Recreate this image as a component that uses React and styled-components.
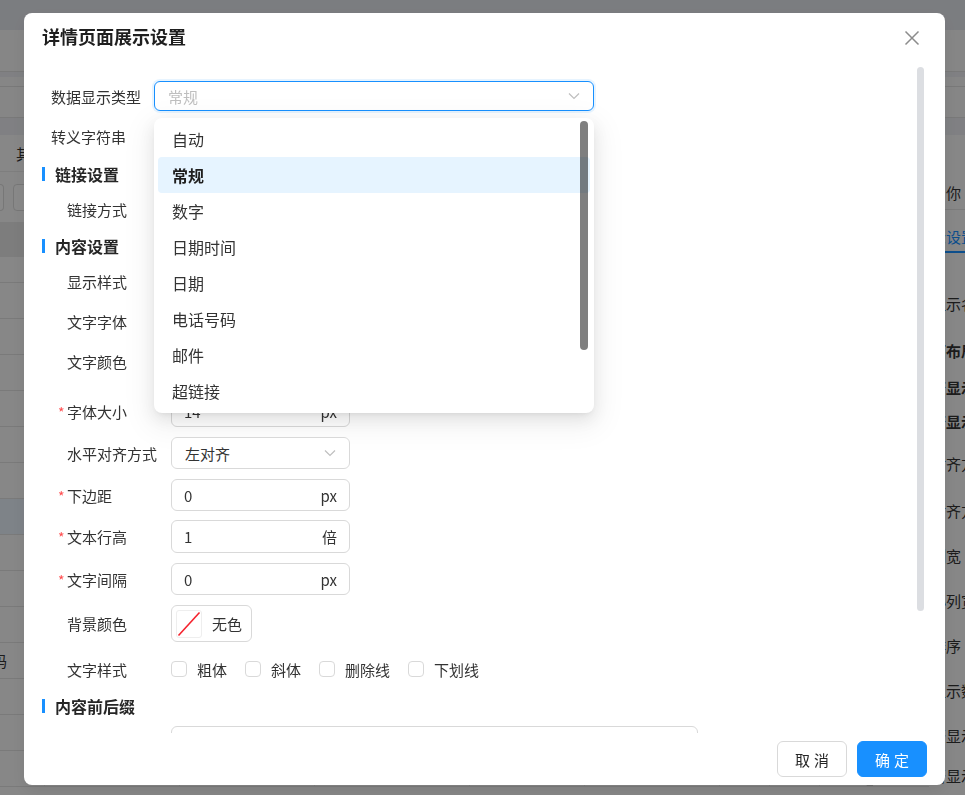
import styled, { createGlobalStyle } from "styled-components";

const GlobalStyle = createGlobalStyle`
  html, body { margin: 0; padding: 0; }
  body {
    font-family: "Noto Sans CJK SC", "Noto Sans", sans-serif;
    background: #f2f3f5;
    overflow: hidden;
  }
  * { box-sizing: border-box; }
`;

/* ---------- page behind the dialog ---------- */

const Page = styled.div`
  width: 965px;
  height: 795px;
  display: flex;
  flex-direction: column;
  background: #f2f3f5;
  overflow: hidden;
  color: #333;
  font-size: 15px;
`;

const TopBar = styled.div`
  height: 30px;
  flex-shrink: 0;
  background: #e1e3ea;
`;

const Strip = styled.div`
  height: ${(p) => p.$h}px;
  flex-shrink: 0;
  background: ${(p) => (p.$band ? "#e9eaee" : "#f4f4f4")};
  border-bottom: ${(p) => (p.$line ? "1px solid #dcdcdc" : "none")};
`;

const Workspace = styled.div`
  flex: 1;
  display: flex;
  min-height: 0;
`;

const MainPane = styled.div`
  flex: 1;
  display: flex;
  flex-direction: column;
  background: #f6f6f6;
`;

const PaneTitle = styled.div`
  height: 37px;
  padding-left: 16px;
  display: flex;
  align-items: center;
  border-bottom: 1px solid #e6e6e6;
`;

const ToolRow = styled.div`
  height: 50px;
  display: flex;
  align-items: center;
  gap: 9px;
`;

const GhostButton = styled.div`
  width: ${(p) => p.$w}px;
  height: 27px;
  border: 1px solid #d9d9d9;
  border-radius: ${(p) => (p.$cut ? "0 4px 4px 0" : "4px")};
  border-left: ${(p) => (p.$cut ? "none" : "1px solid #d9d9d9")};
  background: #fafafa;
`;

const cols = "45px 135px 135px 155px 115px 135px 50px 50px 47px 6px 1fr";

const TableHead = styled.div`
  height: 35px;
  display: grid;
  grid-template-columns: ${cols};
  background: #e4e4e4;
`;

const TableRow = styled.div`
  height: ${(p) => p.$h}px;
  display: grid;
  grid-template-columns: ${cols};
  background: ${(p) => (p.$active ? "#e6eef8" : "#f6f6f6")};
  border-bottom: 1px solid #dedede;
`;

const Cell = styled.div`
  border-right: 1px solid #e6e6e6;
  display: flex;
  align-items: center;
  justify-content: flex-end;
  padding-right: 37px;
  white-space: nowrap;
`;

const ScrollCell = styled.div`
  background: #c8c8c8;
`;

const SidePane = styled.div`
  width: 36px;
  flex-shrink: 0;
  background: #f6f6f6;
  padding-left: 2px;
  display: flex;
  flex-direction: column;
  white-space: nowrap;
  overflow: hidden;
`;

const SideRow = styled.div`
  height: ${(p) => p.$h}px;
  flex-shrink: 0;
  display: flex;
  align-items: center;
  font-weight: ${(p) => (p.$bold ? 700 : 400)};
  color: ${(p) => (p.$tab ? "#1890ff" : "#333")};
  border-bottom: ${(p) => (p.$tab ? "2px solid #1890ff" : p.$line ? "1px solid #e0e0e0" : "none")};
`;

const sideRows = [
  { t: "", h: 40 },
  { t: "：你", h: 35, line: true },
  { t: "", h: 12 },
  { t: "示设置", h: 31, tab: true },
  { t: "", h: 30 },
  { t: "显示名称", h: 40 },
  { t: "面布局", h: 54, bold: true },
  { t: "否显示", h: 20, bold: true },
  { t: "否显示", h: 48, bold: true },
  { t: "对齐方式", h: 36 },
  { t: "对齐方式", h: 58 },
  { t: "列宽", h: 32 },
  { t: "小列宽", h: 58 },
  { t: "排序", h: 32 },
  { t: "显示数", h: 58 },
  { t: "否显示", h: 32 },
  { t: "否显示", h: 48 },
];

/* ---------- dialog ---------- */

const Overlay = styled.div`
  position: fixed;
  inset: 0;
  background: rgba(0, 0, 0, 0.45);
  padding: 13px 20px 10px 24px;
  display: flex;
`;

const Modal = styled.div`
  flex: 1;
  display: flex;
  flex-direction: column;
  background: #fff;
  border-radius: 8px;
  overflow: hidden;
  box-shadow: 0 6px 16px rgba(0, 0, 0, 0.08);
`;

const Header = styled.div`
  height: 52px;
  flex-shrink: 0;
  display: flex;
  align-items: flex-start;
  justify-content: space-between;
  padding: 11px 25px 0 18px;
`;

const Title = styled.div`
  font-size: 18px;
  line-height: 24px;
  font-weight: 700;
  color: #1f1f1f;
`;

const CloseButton = styled.button`
  margin-top: 6px;
  width: 16px;
  height: 16px;
  padding: 0;
  border: none;
  background: none;
  display: flex;
  cursor: pointer;
`;

const Body = styled.div`
  flex: 1;
  position: relative;
  overflow: hidden;
  padding-top: 16px;
`;

const BodyThumb = styled.div`
  position: absolute;
  right: 21px;
  top: 2px;
  width: 7px;
  height: 544px;
  border-radius: 4px;
  background: #dcdee2;
`;

const Row = styled.div`
  display: flex;
  align-items: center;
  height: ${(p) => p.$h || 32}px;
  margin-top: ${(p) => (p.$mt === undefined ? 10 : p.$mt)}px;
  padding-left: ${(p) => (p.$sub ? 43 : 27)}px;
`;

const Label = styled.div`
  position: relative;
  width: ${(p) => (p.$sub ? 104 : 103)}px;
  flex-shrink: 0;
  font-size: 15px;
  color: #333;
  white-space: nowrap;

  &::before {
    content: ${(p) => (p.$required ? '"*"' : "none")};
    position: absolute;
    left: -9px;
    top: 1px;
    color: #ff4d4f;
    font-size: 14px;
  }
`;

const Section = styled.div`
  display: flex;
  align-items: center;
  gap: 10px;
  height: 24px;
  margin-top: ${(p) => p.$mt}px;
  padding-left: 18px;
`;

const SectionBar = styled.span`
  width: 3px;
  height: 14px;
  background: #1890ff;
`;

const SectionText = styled.span`
  font-size: 16px;
  font-weight: 700;
  color: #262626;
`;

const SelectWrap = styled.div`
  position: relative;
  z-index: 10;
  width: ${(p) => p.$w}px;
`;

const SelectBox = styled.div`
  height: ${(p) => p.$h}px;
  display: flex;
  align-items: center;
  justify-content: space-between;
  padding: 0 13px 0 13px;
  border: 1px solid ${(p) => (p.$focus ? "#1890ff" : "#d9d9d9")};
  border-radius: 6px;
  box-shadow: ${(p) => (p.$focus ? "0 0 0 2px rgba(24,144,255,0.1)" : "none")};
  font-size: 15px;
  color: ${(p) => (p.$placeholder ? "#bfbfbf" : "#333")};
  background: #fff;
`;

const Dropdown = styled.div`
  position: absolute;
  top: calc(100% + 7px);
  left: 0;
  width: 100%;
  padding: 3px 4px 4px;
  background: #fff;
  border-radius: 8px;
  box-shadow: 0 6px 16px 0 rgba(0, 0, 0, 0.08), 0 3px 6px -4px rgba(0, 0, 0, 0.12),
    0 9px 28px 8px rgba(0, 0, 0, 0.05);
`;

const Option = styled.div`
  height: 36px;
  padding: 0 14px;
  display: flex;
  align-items: center;
  font-size: 16px;
  border-radius: 4px;
  color: ${(p) => (p.$selected ? "#1f1f1f" : "#333")};
  font-weight: ${(p) => (p.$selected ? 700 : 400)};
  background: ${(p) => (p.$selected ? "#e6f4ff" : "transparent")};
`;

const DropThumb = styled.div`
  position: absolute;
  right: 6px;
  top: 3px;
  width: 8px;
  height: 229px;
  border-radius: 4px;
  background: rgba(0, 0, 0, 0.5);
`;

const Input = styled.div`
  width: ${(p) => p.$w || 179}px;
  height: ${(p) => p.$h || 32}px;
  display: flex;
  align-items: center;
  justify-content: space-between;
  padding: 0 12px;
  border: 1px solid #d9d9d9;
  border-radius: 6px;
  font-size: 15px;
  color: #333;
  background: #fff;
`;

const ColorButton = styled.div`
  width: 81px;
  height: 37px;
  display: flex;
  align-items: center;
  gap: 10px;
  padding: 0 4px;
  border: 1px solid #d9d9d9;
  border-radius: 6px;
  font-size: 15px;
  color: #333;
`;

const Swatch = styled.div`
  width: 26px;
  height: 28px;
  border: 1px solid #eee;
  border-radius: 3px;
  display: flex;
`;

const CheckGroup = styled.div`
  display: flex;
  align-items: center;
  gap: 18px;
`;

const CheckItem = styled.label`
  display: flex;
  align-items: center;
  gap: 10px;
  font-size: 15px;
  color: #333;
`;

const Box = styled.span`
  width: 16px;
  height: 16px;
  border: 1px solid #d9d9d9;
  border-radius: 4px;
  background: #fff;
`;

const Footer = styled.div`
  height: 52px;
  flex-shrink: 0;
  display: flex;
  justify-content: flex-end;
  align-items: center;
  gap: 10px;
  padding: 0 18px;
`;

const Button = styled.button`
  width: 70px;
  height: 36px;
  border-radius: 6px;
  font-family: inherit;
  font-size: 15px;
  letter-spacing: 4px;
  text-indent: 4px;
  cursor: pointer;
  border: 1px solid ${(p) => (p.$primary ? "#1890ff" : "#d9d9d9")};
  background: ${(p) => (p.$primary ? "#1890ff" : "#fff")};
  color: ${(p) => (p.$primary ? "#fff" : "#262626")};
`;

const Chevron = () => (
  <svg width="12" height="8" viewBox="0 0 12 8">
    <path d="M1 1.5 L6 6.5 L11 1.5" fill="none" stroke="#bfbfbf" strokeWidth="1.2" />
  </svg>
);

const options = ["自动", "常规", "数字", "日期时间", "日期", "电话号码", "邮件", "超链接"];

const tableRows = Array.from({ length: 15 }, (_, i) => i);

export default function App() {
  return (
    <>
      <GlobalStyle />
      <Page>
        <TopBar />
        <Strip $h={42} $line />
        <Strip $h={5} $band />
        <Strip $h={10} $line />
        <Strip $h={31} $line />
        <Strip $h={17} $band />
        <Workspace>
          <MainPane>
            <PaneTitle>其他设置</PaneTitle>
            <ToolRow>
              <GhostButton $w={4} $cut />
              <GhostButton $w={60} />
            </ToolRow>
            <TableHead />
            {tableRows.map((i) => (
              <TableRow key={i} $h={i === 0 ? 26 : 36} $active={i === 7}>
                <Cell>{i === 11 ? "号码" : ""}</Cell>
                <Cell /><Cell /><Cell /><Cell /><Cell /><Cell /><Cell /><Cell />
                <ScrollCell />
                <div />
              </TableRow>
            ))}
          </MainPane>
          <SidePane>
            {sideRows.map((r, i) => (
              <SideRow key={i} $h={r.h} $bold={r.bold} $tab={r.tab} $line={r.line}>
                {r.t}
              </SideRow>
            ))}
          </SidePane>
        </Workspace>
      </Page>

      <Overlay>
        <Modal>
          <Header>
            <Title>详情页面展示设置</Title>
            <CloseButton aria-label="关闭">
              <svg width="16" height="16" viewBox="0 0 16 16">
                <path d="M1.5 1.5 L14.5 14.5 M14.5 1.5 L1.5 14.5" stroke="#8c8c8c" strokeWidth="1.5" />
              </svg>
            </CloseButton>
          </Header>

          <Body>
            <BodyThumb />

            <Row $h={30} $mt={0}>
              <Label>数据显示类型</Label>
              <SelectWrap $w={440}>
                <SelectBox $h={30} $focus $placeholder>
                  常规
                  <Chevron />
                </SelectBox>
                <Dropdown>
                  <DropThumb />
                  {options.map((o) => (
                    <Option key={o} $selected={o === "常规"}>{o}</Option>
                  ))}
                </Dropdown>
              </SelectWrap>
            </Row>
            <Row $h={30}>
              <Label>转义字符串</Label>
            </Row>

            <Section $mt={11}>
              <SectionBar />
              <SectionText>链接设置</SectionText>
            </Section>
            <Row $sub $h={30} $mt={8}>
              <Label $sub>链接方式</Label>
            </Row>

            <Section $mt={10}>
              <SectionBar />
              <SectionText>内容设置</SectionText>
            </Section>
            <Row $sub $h={30} $mt={8}>
              <Label $sub>显示样式</Label>
            </Row>
            <Row $sub $h={30}>
              <Label $sub>文字字体</Label>
            </Row>
            <Row $sub $h={30}>
              <Label $sub>文字颜色</Label>
            </Row>
            <Row $sub $mt={19}>
              <Label $sub $required>字体大小</Label>
              <Input>
                <span>14</span>
                <span>px</span>
              </Input>
            </Row>
            <Row $sub>
              <Label $sub>水平对齐方式</Label>
              <SelectWrap $w={179}>
                <SelectBox $h={32}>
                  左对齐
                  <Chevron />
                </SelectBox>
              </SelectWrap>
            </Row>
            <Row $sub>
              <Label $sub $required>下边距</Label>
              <Input>
                <span>0</span>
                <span>px</span>
              </Input>
            </Row>
            <Row $sub $h={33} $mt={9}>
              <Label $sub $required>文本行高</Label>
              <Input $h={33}>
                <span>1</span>
                <span>倍</span>
              </Input>
            </Row>
            <Row $sub $mt={10}>
              <Label $sub $required>文字间隔</Label>
              <Input>
                <span>0</span>
                <span>px</span>
              </Input>
            </Row>
            <Row $sub $h={37}>
              <Label $sub>背景颜色</Label>
              <ColorButton>
                <Swatch>
                  <svg width="24" height="26" viewBox="0 0 24 26">
                    <path d="M1.5 24.5 L22.5 1.5" stroke="#f5222d" strokeWidth="1.6" />
                  </svg>
                </Swatch>
                无色
              </ColorButton>
            </Row>
            <Row $sub $h={24} $mt={15}>
              <Label $sub>文字样式</Label>
              <CheckGroup>
                <CheckItem><Box />粗体</CheckItem>
                <CheckItem><Box />斜体</CheckItem>
                <CheckItem><Box />删除线</CheckItem>
                <CheckItem><Box />下划线</CheckItem>
              </CheckGroup>
            </Row>

            <Section $mt={13}>
              <SectionBar />
              <SectionText>内容前后缀</SectionText>
            </Section>
            <Row $sub $mt={8}>
              <Label $sub />
              <Input $w={527} />
            </Row>
          </Body>

          <Footer>
            <Button>取消</Button>
            <Button $primary>确定</Button>
          </Footer>
        </Modal>
      </Overlay>
    </>
  );
}
